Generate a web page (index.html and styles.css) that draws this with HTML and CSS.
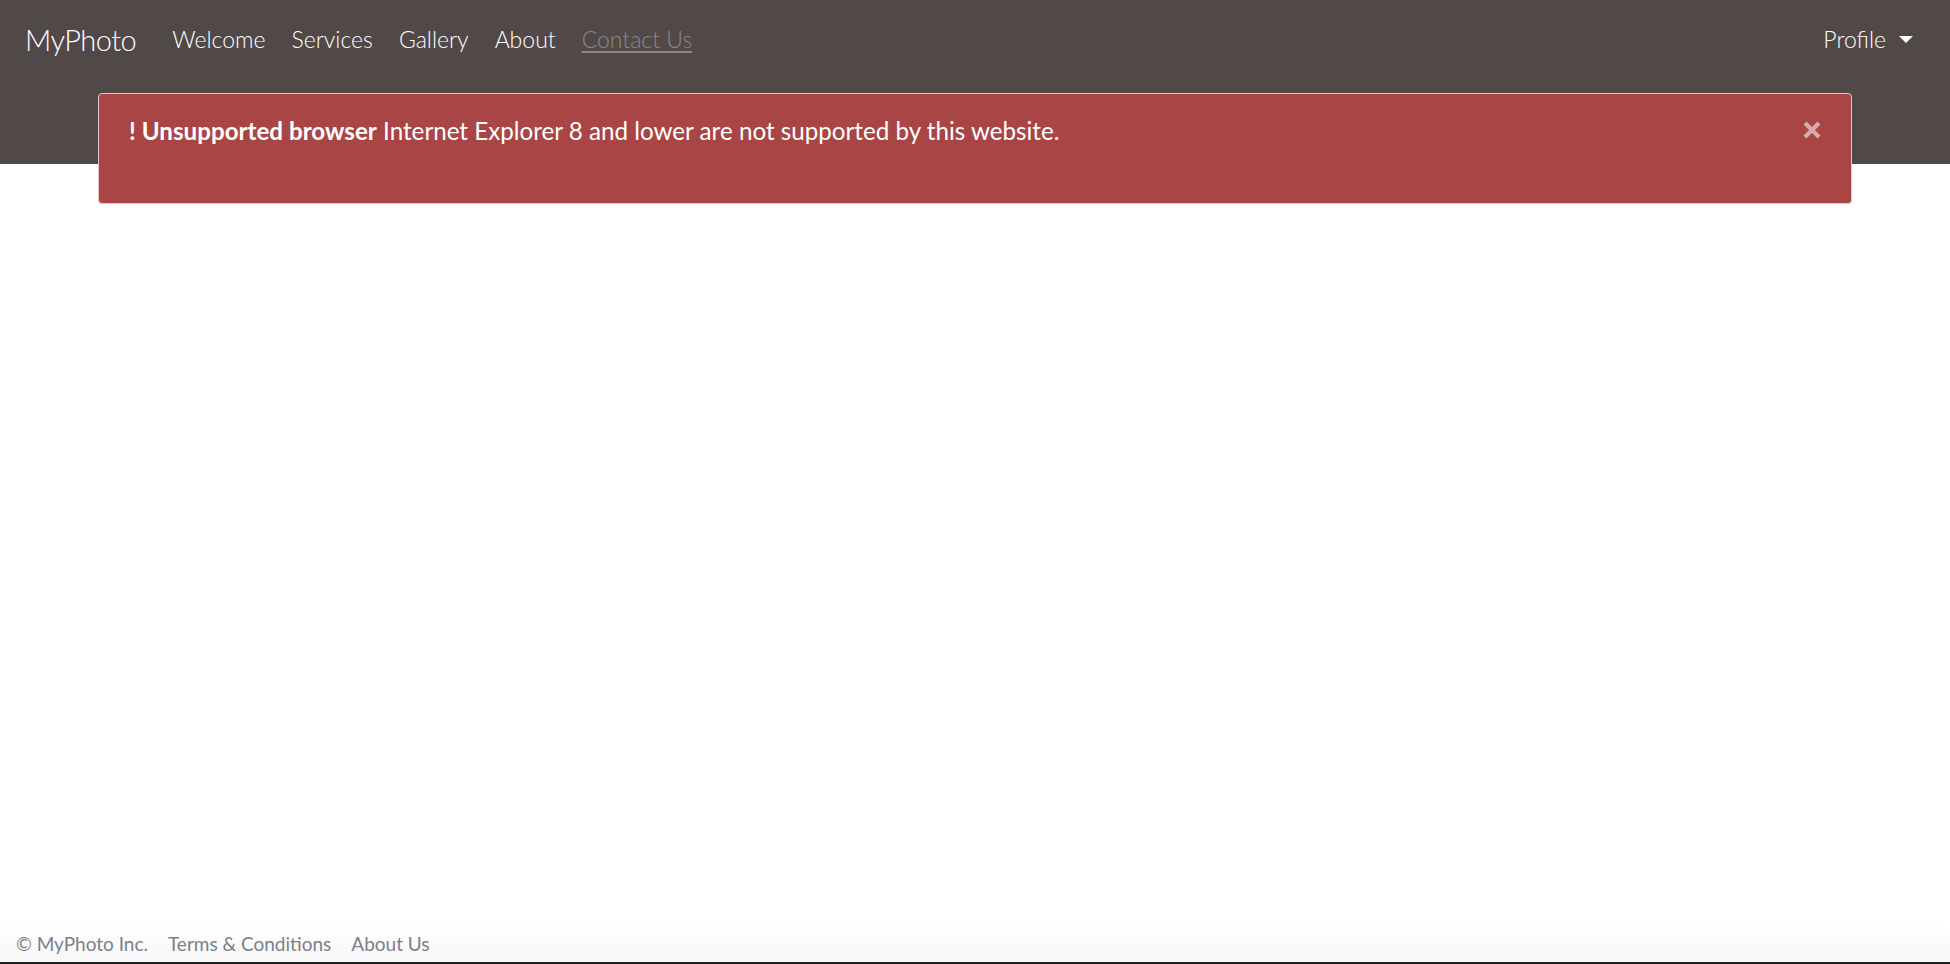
FILE: index.html
```html
<!DOCTYPE html>
<html lang="en">
<head>
<meta charset="utf-8">
<title>MyPhoto</title>
<link rel="stylesheet" href="styles.css">
</head>
<body>
<div class="page">
  <header class="header">
    <nav class="navbar">
      <a class="brand" href="#">MyPhoto</a>
      <ul class="nav-links">
        <li><a href="#">Welcome</a></li>
        <li><a href="#">Services</a></li>
        <li><a href="#">Gallery</a></li>
        <li><a href="#">About</a></li>
        <li><a class="active" href="#">Contact Us</a></li>
      </ul>
      <a class="profile" href="#">Profile <span class="caret"></span></a>
    </nav>
    <div class="alert">
      <p class="alert-text"><strong>! Unsupported browser</strong> Internet Explorer 8 and lower are not supported by this website.</p>
      <button class="close" aria-label="Close">
        <svg width="20" height="20" viewBox="0 0 20 20"><path d="M3 3 L17 17 M17 3 L3 17" stroke="currentColor" stroke-width="4.2" stroke-linecap="butt" fill="none"/></svg>
      </button>
    </div>
  </header>
  <main class="content"></main>
  <footer class="footer">
    <span>© MyPhoto Inc.</span>
    <a href="#">Terms &amp; Conditions</a>
    <a href="#">About Us</a>
  </footer>
</div>
</body>
</html>
```
FILE: styles.css
```css
html, body {
  margin: 0;
  padding: 0;
  height: 100%;
  background: #ffffff;
}
.page {
  min-height: 100vh;
  display: flex;
  flex-direction: column;
  font-family: "Lato", "Liberation Sans", sans-serif;
}
.header {
  background: #514948;
  height: 164px;
  flex-shrink: 0;
}
.navbar {
  height: 78px;
  display: flex;
  align-items: center;
  padding: 0 37px 0 25px;
  font-family: "Lato", sans-serif;
  font-weight: 300;
}
.brand {
  color: #ffffff;
  text-decoration: none;
  font-size: 29px;
  letter-spacing: -0.5px;
  margin-right: 36px;
}
.nav-links {
  list-style: none;
  margin: 0;
  padding: 0;
  display: flex;
  gap: 26px;
  flex: 1;
}
.nav-links a {
  color: #ffffff;
  text-decoration: none;
  font-size: 23px;
}
.nav-links a.active {
  color: #8d8786;
  text-decoration: underline;
  text-underline-offset: 3px;
}
.profile {
  color: #ffffff;
  text-decoration: none;
  font-size: 23px;
  display: flex;
  align-items: center;
  gap: 13px;
}
.caret {
  width: 0;
  height: 0;
  border-left: 7px solid transparent;
  border-right: 7px solid transparent;
  border-top: 7px solid #ffffff;
}
.alert {
  margin: 15px 98px 0;
  height: 111px;
  box-sizing: border-box;
  background: #a94545;
  border: 1px solid #e7c3c6;
  border-radius: 4px;
  padding: 21px 29px 0 30px;
  display: flex;
  justify-content: space-between;
  align-items: flex-start;
  position: relative;
  z-index: 1;
}
.alert-text {
  margin: 0;
  color: #ffffff;
  font-size: 24.2px;
  line-height: 32px;
}
.alert-text strong {
  font-weight: 700;
}
.close {
  background: none;
  border: 0;
  padding: 0;
  margin-top: 5px;
  color: rgba(255, 255, 255, 0.55);
  cursor: pointer;
  display: flex;
}
.content {
  flex: 1;
}
.footer {
  height: 38px;
  display: flex;
  align-items: center;
  gap: 20px;
  padding: 0 16px;
  background: linear-gradient(#ffffff, #f7f7f7);
  border-bottom: 2px solid #1e1e1e;
  font-size: 19px;
  color: #7b8089;
}
.footer a {
  color: #7b8089;
  text-decoration: none;
}
```
